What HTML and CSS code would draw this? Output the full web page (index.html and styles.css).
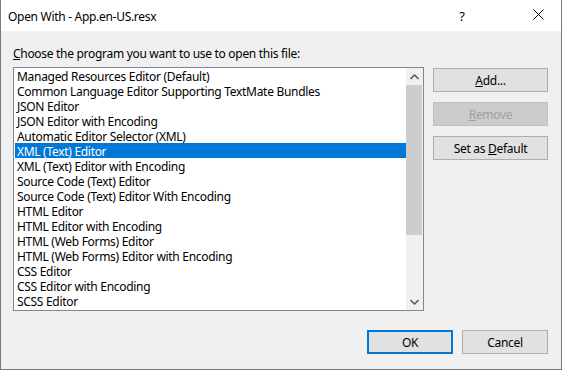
FILE: index.html
```html
<!DOCTYPE html>
<html lang="en">
<head>
  <meta charset="UTF-8">
  <title>Open With - App.en-US.resx</title>
  <link rel="stylesheet" href="styles.css">
</head>
<body>

<div class="window">
  <div class="titlebar">
    <div class="title">Open With - App.en-US.resx</div>
    <div class="help">?</div>
    <div class="close">
      <svg width="11" height="11" viewBox="0 0 11 11">
        <path d="M0.5 0.5 L10.5 10.5 M10.5 0.5 L0.5 10.5" stroke="#000" stroke-width="1" fill="none"/>
      </svg>
    </div>
  </div>

  <div class="content">
    <div class="label"><u>C</u>hoose the program you want to use to open this file:</div>

    <div class="main">
      <div class="listbox">
        <div class="items">
          <div class="item">Managed Resources Editor (Default)</div>
          <div class="item">Common Language Editor Supporting TextMate Bundles</div>
          <div class="item">JSON Editor</div>
          <div class="item">JSON Editor with Encoding</div>
          <div class="item">Automatic Editor Selector (XML)</div>
          <div class="item selected">XML (Text) Editor</div>
          <div class="item">XML (Text) Editor with Encoding</div>
          <div class="item">Source Code (Text) Editor</div>
          <div class="item">Source Code (Text) Editor With Encoding</div>
          <div class="item">HTML Editor</div>
          <div class="item">HTML Editor with Encoding</div>
          <div class="item">HTML (Web Forms) Editor</div>
          <div class="item">HTML (Web Forms) Editor with Encoding</div>
          <div class="item">CSS Editor</div>
          <div class="item">CSS Editor with Encoding</div>
          <div class="item">SCSS Editor</div>
        </div>
        <div class="scrollbar">
          <div class="arrow">
            <svg width="9" height="6" viewBox="0 0 9 6">
              <path d="M0.5 5 L4.5 1 L8.5 5" stroke="#606060" stroke-width="1.6" fill="none"/>
            </svg>
          </div>
          <div class="track">
            <div class="thumb"></div>
          </div>
          <div class="arrow">
            <svg width="9" height="6" viewBox="0 0 9 6">
              <path d="M0.5 1 L4.5 5 L8.5 1" stroke="#606060" stroke-width="1.6" fill="none"/>
            </svg>
          </div>
        </div>
      </div>

      <div class="side">
        <button class="btn"><u>A</u>dd...</button>
        <button class="btn" disabled><u>R</u>emove</button>
        <button class="btn">Set as <u>D</u>efault</button>
      </div>
    </div>

    <div class="footer">
      <button class="btn default">OK</button>
      <button class="btn">Cancel</button>
    </div>
  </div>
</div>

</body>
</html>
```

FILE: styles.css
```css
/* Dialog frame */
body {
  margin: 0;
  padding: 0;
  font-family: 'Segoe UI', 'Noto Sans', sans-serif;
  font-size: 12px;
  letter-spacing: -0.3px;
  color: #000;
  background: #f0f0f0;
}

.window {
  width: 562px;
  height: 370px;
  box-sizing: border-box;
  border: 1px solid #7a7a7a;
  border-top: none;
  background: #f0f0f0;
  display: flex;
  flex-direction: column;
}

/* Title bar */
.titlebar {
  height: 31px;
  background: #ffffff;
  display: flex;
  align-items: center;
  flex-shrink: 0;
}

.title {
  flex: 1;
  padding-left: 7px;
  padding-top: 1px;
}

.help {
  width: 46px;
  text-align: center;
  font-size: 13px;
  margin-right: 30px;
  padding-top: 1px;
}

.close {
  width: 46px;
  display: flex;
  justify-content: center;
  padding-bottom: 2px;
}

/* Content */
.content {
  padding: 14px 13px 0 12px;
}

.label {
  height: 14px;
  line-height: 15px;
  padding-top: 1px;
}

.main {
  display: flex;
  gap: 9px;
  margin-top: 7px;
}

.listbox {
  width: 411px;
  height: 244px;
  box-sizing: border-box;
  border: 1px solid #828790;
  background: #ffffff;
  display: flex;
}

.items {
  flex: 1;
  overflow: hidden;
}

.item {
  height: 14px;
  line-height: 15px;
  padding-top: 1px;
  margin-left: 1px;
  padding-left: 2px;
  white-space: nowrap;
}

.item.selected {
  background: #0078d7;
  color: #ffffff;
}

/* Scrollbar */
.scrollbar {
  width: 17px;
  background: #f0f0f0;
  display: flex;
  flex-direction: column;
}

.arrow {
  height: 17px;
  display: flex;
  align-items: center;
  justify-content: center;
}

.track {
  flex: 1;
}

.thumb {
  height: 150px;
  margin: 0 1px 0 0;
  background: #cdcdcd;
}

/* Buttons */
.side {
  display: flex;
  flex-direction: column;
  gap: 10px;
  padding-top: 1px;
}

.btn {
  width: 115px;
  height: 24px;
  box-sizing: border-box;
  font-family: inherit;
  font-size: 12px;
  letter-spacing: -0.3px;
  color: #000;
  background: #e1e1e1;
  border: 1px solid #adadad;
  border-radius: 0;
  padding: 1px 0 0;
}

.btn:disabled {
  background: #cccccc;
  border-color: #bfbfbf;
  color: #a0a0a0;
}

.footer {
  display: flex;
  justify-content: flex-end;
  gap: 9px;
  margin-top: 19px;
}

.footer .btn {
  width: 86px;
}

.btn.default {
  border: 2px solid #0078d7;
}
```
